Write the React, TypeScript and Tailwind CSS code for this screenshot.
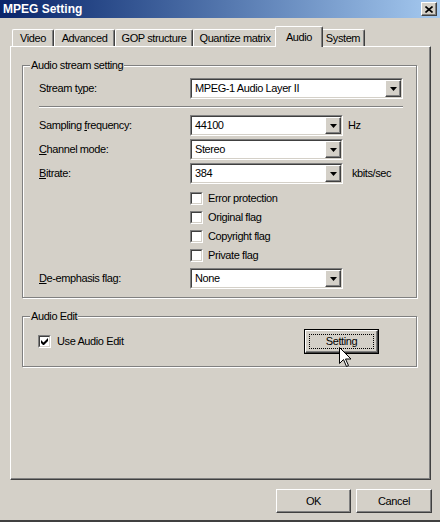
import React from 'react';

const face = 'bg-[#d4d0c8]';
const raised =
  'border border-t-white border-l-white border-r-[#404040] border-b-[#404040] shadow-[inset_-1px_-1px_0_#808080]';

function Key({ text, k }: { text: string; k: number }) {
  return (
    <>
      {text.slice(0, k)}
      <span className="underline underline-offset-[1px]">{text[k]}</span>
      {text.slice(k + 1)}
    </>
  );
}

function Combo({ value, width }: { value: string; width: string }) {
  return (
    <div className={`${width} h-[21px] border border-t-[#808080] border-l-[#808080] border-b-white border-r-white`}>
      <div className="h-full border border-t-[#404040] border-l-[#404040] border-b-[#d4d0c8] border-r-[#d4d0c8] bg-white flex items-center">
        <span className="flex-1 pl-[3px] leading-none">{value}</span>
        <div className={`w-[16px] h-full ${face} ${raised} flex items-center justify-center`}>
          <svg width="7" height="4" viewBox="0 0 7 4">
            <path d="M0 0h7L3.5 4z" fill="#000" />
          </svg>
        </div>
      </div>
    </div>
  );
}

function Check({ checked = false }: { checked?: boolean }) {
  return (
    <div className="w-[13px] h-[13px] border border-t-[#808080] border-l-[#808080] border-b-white border-r-white">
      <div className="w-full h-full border border-t-[#404040] border-l-[#404040] border-b-[#d4d0c8] border-r-[#d4d0c8] bg-white flex items-center justify-center">
        {checked && (
          <svg width="7" height="7" viewBox="0 0 7 7">
            <path d="M0 2v3l2 2h1l4-4V0L2.5 4.5z" fill="#000" />
          </svg>
        )}
      </div>
    </div>
  );
}

function Group({ title, className, children }: { title: string; className: string; children: React.ReactNode }) {
  return (
    <div className={`relative border border-[#808080] shadow-[1px_1px_0_#fff,inset_1px_1px_0_#fff] ${className}`}>
      <span className={`absolute -top-[8px] left-[7px] px-[1px] ${face} leading-[14px]`}>{title}</span>
      {children}
    </div>
  );
}

const tabs = ['Video', 'Advanced', 'GOP structure', 'Quantize matrix', 'Audio', 'System'];
const tabWidths = ['w-[42px]', 'w-[61px]', 'w-[78px]', 'w-[84px]', 'w-[48px]', 'w-[44px]'];

export default function App() {
  return (
    <div
      className={`relative w-[440px] h-[522px] ${face} flex flex-col overflow-hidden border-b-2 border-b-[#404040] text-[11px] tracking-[-0.4px] text-black font-['Liberation_Sans',Arial,sans-serif]`}
    >
      {/* title bar */}
      <div className="h-[18px] flex items-center justify-between pl-[3px] pr-[3px] bg-gradient-to-r from-[#0a246a] to-[#a6caf0]">
        <span className="text-white font-bold text-[12px] tracking-normal">MPEG Setting</span>
        <div className={`w-[16px] h-[14px] ${face} ${raised} flex items-center justify-center`}>
          <svg width="8" height="7" viewBox="0 0 8 7">
            <path d="M0.5 0.5l7 6M7.5 0.5l-7 6" stroke="#000" strokeWidth="1.6" />
          </svg>
        </div>
      </div>

      <div className="flex flex-col pl-[10px] pr-[8px] pt-[8px]">
        {/* tabs */}
        <div className="flex items-end h-[20px] pl-[2px]">
          {tabs.map((t, i) =>
            t === 'Audio' ? (
              <div
                key={t}
                className={`relative z-10 -mx-[2px] ${tabWidths[i]} h-[21px] -mb-[1px] ${face} border-t border-l border-t-white border-l-white border-r border-r-[#404040] shadow-[inset_-1px_0_0_#808080] rounded-t-[2px] flex items-start justify-center pt-[2px]`}
              >
                {t}
              </div>
            ) : (
              <div
                key={t}
                className={`${tabWidths[i]} h-[17px] border-t border-l border-t-white border-l-white border-r border-r-[#404040] shadow-[inset_-1px_0_0_#808080] rounded-t-[2px] flex items-center justify-center`}
              >
                {t}
              </div>
            )
          )}
        </div>

        {/* panel */}
        <div className="w-[421px] h-[434px] border border-t-white border-l-white border-r-[#404040] border-b-[#404040] shadow-[inset_-1px_-1px_0_#808080] pt-[18px] pl-[11px]">
          <Group title="Audio stream setting" className="w-[395px] h-[233px]">
            <div className="pl-[16px] pt-[12px] flex flex-col">
              <div className="flex items-center">
                <span className="w-[151px]">
                  <Key text="Stream type:" k={8} />
                </span>
                <Combo value="MPEG-1 Audio Layer II" width="w-[213px]" />
              </div>
              <div className="w-[364px] mt-[7px] border-t border-t-[#808080] border-b border-b-white" />
              <div className="flex flex-col gap-[3px] mt-[7px]">
                <div className="flex items-center">
                  <span className="w-[151px]">
                    <Key text="Sampling frequency:" k={9} />
                  </span>
                  <Combo value="44100" width="w-[153px]" />
                  <span className="ml-[5px]">Hz</span>
                </div>
                <div className="flex items-center">
                  <span className="w-[151px]">
                    <Key text="Channel mode:" k={0} />
                  </span>
                  <Combo value="Stereo" width="w-[153px]" />
                </div>
                <div className="flex items-center">
                  <span className="w-[151px]">
                    <Key text="Bitrate:" k={0} />
                  </span>
                  <Combo value="384" width="w-[153px]" />
                  <span className="ml-[9px]">kbits/sec</span>
                </div>
              </div>
              <div className="flex flex-col mt-[5px] pl-[151px]">
                {['Error protection', 'Original flag', 'Copyright flag', 'Private flag'].map((c) => (
                  <div key={c} className="h-[19px] flex items-center gap-[5px]">
                    <Check />
                    <span>{c}</span>
                  </div>
                ))}
              </div>
              <div className="flex items-center mt-[3px]">
                <span className="w-[151px]">
                  <Key text="De-emphasis flag:" k={0} />
                </span>
                <Combo value="None" width="w-[153px]" />
              </div>
            </div>
          </Group>

          <Group title="Audio Edit" className="w-[395px] h-[51px] mt-[18px]">
            <div className="h-full flex items-center pl-[15px] pr-[37px]">
              <Check checked />
              <span className="ml-[6px]">Use Audio Edit</span>
              <div className="ml-auto w-[75px] h-[25px] border border-black">
                <div className={`relative h-full ${raised} flex items-center justify-center`}>
                  <span className="absolute inset-[3px] border border-dotted border-black" />
                  Setting
                </div>
              </div>
            </div>
          </Group>
        </div>

        {/* dialog buttons */}
        <div className="flex justify-end gap-[5px] mt-[9px]">
          <div className={`w-[75px] h-[24px] ${raised} flex items-center justify-center`}>OK</div>
          <div className={`w-[76px] h-[24px] ${raised} flex items-center justify-center`}>Cancel</div>
        </div>
      </div>

      {/* mouse pointer */}
      <svg className="absolute left-[339px] top-[347px]" width="12" height="20" viewBox="0 0 12 20">
        <path d="M0.5 0.5v16l4-4 3 7 2-1-3-6.5h5.5z" fill="#fff" stroke="#000" strokeWidth="1" />
      </svg>
    </div>
  );
}
